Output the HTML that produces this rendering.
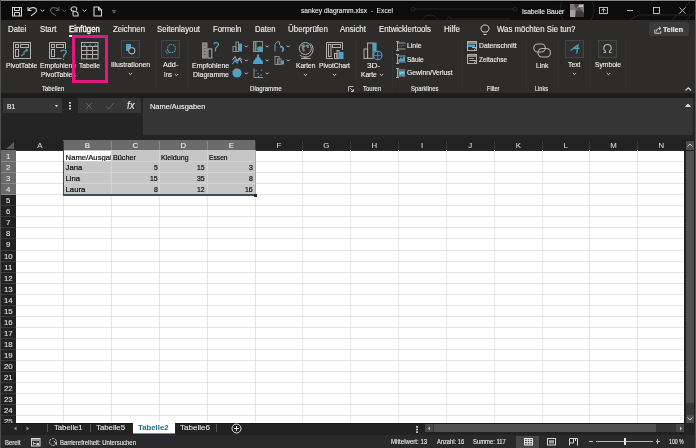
<!DOCTYPE html>
<html><head><meta charset="utf-8"><style>
html,body{margin:0;padding:0;}
body{width:696px;height:448px;overflow:hidden;position:relative;font-family:"Liberation Sans", sans-serif;}
div{font-family:"Liberation Sans", sans-serif;}
</style></head><body>
<div style="position:absolute;left:0px;top:0px;width:696px;height:448px;background:#2d2c2b;"></div><div style="position:absolute;left:0px;top:0px;width:696px;height:20px;background:#0c0c0c;"></div><svg style="position:absolute;left:380px;top:0px;" width="316" height="20" viewBox="0 0 316 20"><g stroke="#262626" stroke-width="1" fill="none"><circle cx="33" cy="9" r="2"/><line x1="35" y1="9" x2="133" y2="9"/><circle cx="135" cy="9" r="2"/><circle cx="50" cy="24" r="9"/><circle cx="69" cy="19" r="2"/><line x1="71" y1="19" x2="130" y2="19"/><circle cx="197" cy="10" r="17"/><path d="M250 20 L258 15 L316 15"/><path d="M292 20 L310 2"/><path d="M306 20 L316 10"/></g></svg><svg style="position:absolute;left:11px;top:6px;" width="12" height="12" viewBox="0 0 12 12"><g stroke="#d8d8d8" stroke-width="1" fill="none"><rect x="1.5" y="1.5" width="9" height="8.5"/><path d="M3.5 1.5 V4.5 H8.5 V1.5"/><path d="M3.5 10 V6.5 H8.5 V10"/></g></svg><svg style="position:absolute;left:27px;top:6px;" width="11" height="11" viewBox="0 0 11 11"><g stroke="#d4d4d4" stroke-width="1.1" fill="none"><path d="M1 1 L1 4.5 L4.5 4.5"/><path d="M1.3 4.3 C3 1 9.5 0.5 9.5 4.5 C9.5 6.5 7 8 4 9.8"/></g></svg><svg style="position:absolute;left:40px;top:9px;" width="5" height="4" viewBox="0 0 5 4"><path d="M0.7 0.7 L2.5 2.5 L4.3 0.7" stroke="#cfcfcf" stroke-width="1" fill="none"/></svg><svg style="position:absolute;left:49px;top:6px;" width="11" height="11" viewBox="0 0 11 11"><g stroke="#5a5a5a" stroke-width="1.1" fill="none"><path d="M10 1 L10 4.5 L6.5 4.5"/><path d="M9.7 4.3 C8 1 1.5 0.5 1.5 4.5 C1.5 6.5 4 8 7 9.8"/></g></svg><svg style="position:absolute;left:62px;top:9px;" width="5" height="4" viewBox="0 0 5 4"><path d="M0.7 0.7 L2.5 2.5 L4.3 0.7" stroke="#5a5a5a" fill="none"/></svg><svg style="position:absolute;left:70px;top:6px;" width="10" height="11" viewBox="0 0 10 11"><g stroke="#d4d4d4" stroke-width="1.1" fill="none"><path d="M2 5 C0 3 1.5 0.8 4 0.8 C6.5 0.8 7.5 3 6 4.5"/><path d="M3 9.5 L3 4 M3 6 C5 5 8 5.5 8 8 L8 10 L3 10"/></g></svg><svg style="position:absolute;left:82px;top:9px;" width="5" height="4" viewBox="0 0 5 4"><path d="M0.7 0.7 L2.5 2.5 L4.3 0.7" stroke="#cfcfcf" fill="none"/></svg><svg style="position:absolute;left:93px;top:6px;" width="10" height="11" viewBox="0 0 10 11"><g stroke="#d4d4d4" stroke-width="1.1" fill="none"><path d="M1 1 L5.5 1 L8.5 4 L8.5 10 L1 10 Z"/><path d="M5.5 1 L5.5 4 L8.5 4"/></g></svg><svg style="position:absolute;left:111.5px;top:9.5px;" width="4" height="4" viewBox="0 0 4 4"><path d="M0 0.5 H4" stroke="#7a7a7a" stroke-width="0.8"/><path d="M0.3 1.6 H3.7 L2 3.4 Z" fill="#7a7a7a"/></svg><div style="position:absolute;left:301.20px;top:7.47px;font-size:7px;line-height:7px;color:#e4e4e4;white-space:pre;transform:scaleX(0.9527) translateZ(0);transform-origin:0 0;-webkit-text-stroke:0.12px currentColor;">sankey diagramm.xlsx  -  Excel</div><div style="position:absolute;left:521.70px;top:7.97px;font-size:7px;line-height:7px;color:#ececec;white-space:pre;transform:scaleX(0.9457) translateZ(0);transform-origin:0 0;-webkit-text-stroke:0.12px currentColor;">Isabelle Bauer</div><svg style="position:absolute;left:570px;top:4px;" width="14" height="13" viewBox="0 0 14 13"><rect width="14" height="13" fill="#7e7878"/><rect x="0" y="6" width="5" height="7" fill="#a8a2a2"/><path d="M5 13 L6 8 C6 5 9 4 11 6 L14 9 L14 13 Z" fill="#3c3a3a"/><path d="M4 0 L9 0 L6 5 Z" fill="#4a4646"/><rect x="9" y="1" width="4" height="2" fill="#c8c4c4"/><circle cx="9" cy="5.5" r="2" fill="#5a5555"/></svg><svg style="position:absolute;left:599px;top:7px;" width="9" height="7" viewBox="0 0 9 7"><rect x="0.5" y="0.5" width="8" height="6" stroke="#c8c8c8" stroke-width="0.9" fill="none"/><path d="M2.5 3.5 L4.5 1.5 L6.5 3.5 M4.5 2 L4.5 5.5" stroke="#c8c8c8" stroke-width="0.9" fill="none"/></svg><div style="position:absolute;left:627px;top:10px;width:6px;height:1px;background:#b8b8b8;"></div><svg style="position:absolute;left:653px;top:7px;" width="7" height="7" viewBox="0 0 7 7"><rect x="0.5" y="0.5" width="6" height="6" stroke="#c8c8c8" stroke-width="0.9" fill="none"/></svg><svg style="position:absolute;left:679px;top:7px;" width="7" height="7" viewBox="0 0 7 7"><path d="M0.5 0.5 L6.5 6.5 M6.5 0.5 L0.5 6.5" stroke="#c8c8c8" stroke-width="0.9" fill="none"/></svg><div style="position:absolute;left:7.90px;top:25.76px;font-size:8.2px;line-height:8.2px;color:#f0f0f0;white-space:pre;transform:scaleX(0.9578) translateZ(0);transform-origin:0 0;-webkit-text-stroke:0.12px currentColor;">Datei</div><div style="position:absolute;left:39.80px;top:25.76px;font-size:8.2px;line-height:8.2px;color:#f0f0f0;white-space:pre;transform:scaleX(0.9479) translateZ(0);transform-origin:0 0;-webkit-text-stroke:0.12px currentColor;">Start</div><div style="position:absolute;left:69.00px;top:25.76px;font-size:8.2px;line-height:8.2px;color:#ffffff;white-space:pre;transform:scaleX(0.9571) translateZ(0);transform-origin:0 0;-webkit-text-stroke:0.3px currentColor;">Einfügen</div><div style="position:absolute;left:112.50px;top:25.76px;font-size:8.2px;line-height:8.2px;color:#f0f0f0;white-space:pre;transform:scaleX(0.9495) translateZ(0);transform-origin:0 0;-webkit-text-stroke:0.12px currentColor;">Zeichnen</div><div style="position:absolute;left:157.00px;top:25.76px;font-size:8.2px;line-height:8.2px;color:#f0f0f0;white-space:pre;transform:scaleX(0.9517) translateZ(0);transform-origin:0 0;-webkit-text-stroke:0.12px currentColor;">Seitenlayout</div><div style="position:absolute;left:213.00px;top:25.76px;font-size:8.2px;line-height:8.2px;color:#f0f0f0;white-space:pre;transform:scaleX(0.9470) translateZ(0);transform-origin:0 0;-webkit-text-stroke:0.12px currentColor;">Formeln</div><div style="position:absolute;left:254.50px;top:25.76px;font-size:8.2px;line-height:8.2px;color:#f0f0f0;white-space:pre;transform:scaleX(0.9363) translateZ(0);transform-origin:0 0;-webkit-text-stroke:0.12px currentColor;">Daten</div><div style="position:absolute;left:288.00px;top:25.76px;font-size:8.2px;line-height:8.2px;color:#f0f0f0;white-space:pre;transform:scaleX(0.9756) translateZ(0);transform-origin:0 0;-webkit-text-stroke:0.12px currentColor;">Überprüfen</div><div style="position:absolute;left:340.00px;top:25.76px;font-size:8.2px;line-height:8.2px;color:#f0f0f0;white-space:pre;transform:scaleX(0.9667) translateZ(0);transform-origin:0 0;-webkit-text-stroke:0.12px currentColor;">Ansicht</div><div style="position:absolute;left:379.00px;top:25.76px;font-size:8.2px;line-height:8.2px;color:#f0f0f0;white-space:pre;transform:scaleX(0.9507) translateZ(0);transform-origin:0 0;-webkit-text-stroke:0.12px currentColor;">Entwicklertools</div><div style="position:absolute;left:444.00px;top:25.76px;font-size:8.2px;line-height:8.2px;color:#f0f0f0;white-space:pre;transform:scaleX(0.9756) translateZ(0);transform-origin:0 0;-webkit-text-stroke:0.12px currentColor;">Hilfe</div><div style="position:absolute;left:69px;top:35px;width:3px;height:2px;background:#e8e8e8;"></div><svg style="position:absolute;left:480px;top:24px;" width="10" height="12" viewBox="0 0 10 12"><g stroke="#d8d8d8" stroke-width="1" fill="none"><path d="M3 8 C1.5 6.5 1 5.5 1 4.5 C1 2 3 1 5 1 C7 1 9 2 9 4.5 C9 5.5 8.5 6.5 7 8 Z"/><line x1="3.5" y1="10.5" x2="6.5" y2="10.5"/></g></svg><div style="position:absolute;left:496.70px;top:25.76px;font-size:8.2px;line-height:8.2px;color:#f0f0f0;white-space:pre;transform:scaleX(0.9554) translateZ(0);transform-origin:0 0;-webkit-text-stroke:0.12px currentColor;">Was möchten Sie tun?</div><div style="position:absolute;left:649px;top:22px;width:40px;height:14px;background:#3b3b3b;border-radius:2px;"></div><svg style="position:absolute;left:653.5px;top:25.5px;" width="8" height="8" viewBox="0 0 8 8"><g stroke="#e0e0e0" stroke-width="0.9" fill="none"><path d="M0.8 3.5 L0.8 7.2 L6.8 7.2 L6.8 5"/><path d="M2.5 5.5 C2.5 3.2 3.8 2.3 6.5 2.3"/><path d="M5 0.6 L6.8 2.3 L5 4"/></g></svg><div style="position:absolute;left:663.30px;top:26.20px;font-size:7.8px;line-height:7.8px;color:#f0f0f0;white-space:pre;transform:scaleX(0.9093) translateZ(0);transform-origin:0 0;-webkit-text-stroke:0.12px currentColor;font-weight:bold;">Teilen</div><div style="position:absolute;left:106px;top:40px;width:1px;height:50px;background:#323232;"></div><div style="position:absolute;left:155px;top:40px;width:1px;height:50px;background:#323232;"></div><div style="position:absolute;left:187px;top:40px;width:1px;height:50px;background:#323232;"></div><div style="position:absolute;left:356px;top:40px;width:1px;height:50px;background:#323232;"></div><div style="position:absolute;left:392px;top:40px;width:1px;height:50px;background:#323232;"></div><div style="position:absolute;left:462px;top:40px;width:1px;height:50px;background:#323232;"></div><div style="position:absolute;left:526px;top:40px;width:1px;height:50px;background:#323232;"></div><div style="position:absolute;left:558px;top:40px;width:1px;height:50px;background:#323232;"></div><div style="position:absolute;left:590px;top:40px;width:1px;height:50px;background:#323232;"></div><div style="position:absolute;left:626px;top:40px;width:1px;height:50px;background:#323232;"></div><svg style="position:absolute;left:13px;top:42px;" width="18" height="17" viewBox="0 0 18 17"><g stroke="#b0b0b0" fill="none" stroke-width="1"><rect x="0.5" y="0.5" width="17" height="16"/><rect x="2.5" y="2.5" width="3" height="3"/><rect x="7.5" y="2.5" width="8" height="3"/><rect x="2.5" y="7.5" width="3" height="7"/></g><path d="M8 14 L11 12 L11 10 L14 8" stroke="#4aa3c8" stroke-width="1.2" fill="none"/><path d="M12.5 7 L14.5 7.5 L14 9.5" stroke="#4aa3c8" fill="none"/></svg><div style="position:absolute;left:5.80px;top:62.66px;font-size:6.9px;line-height:6.9px;color:#f0f0f0;white-space:pre;transform:scaleX(0.9809) translateZ(0);transform-origin:0 0;-webkit-text-stroke:0.12px currentColor;">PivotTable</div><svg style="position:absolute;left:49px;top:42px;" width="19" height="19" viewBox="0 0 19 19"><g stroke="#b0b0b0" fill="none" stroke-width="1"><path d="M12.5 16.5 H0.5 V0.5 H16.5 V7"/><rect x="2.5" y="2.5" width="3" height="3"/><rect x="7.5" y="2.5" width="7" height="3"/><rect x="2.5" y="7.5" width="3" height="7"/></g><path d="M12 9.8 C12 7.5 17.3 7.3 17.3 10 C17.3 12 14.5 12.3 14.5 14.5 L14.5 15.5 M14.5 17 L14.5 18" stroke="#4aa3c8" stroke-width="1.3" fill="none"/></svg><div style="position:absolute;left:39.70px;top:62.66px;font-size:6.9px;line-height:6.9px;color:#f0f0f0;white-space:pre;transform:scaleX(0.9798) translateZ(0);transform-origin:0 0;-webkit-text-stroke:0.12px currentColor;">Empfohlene</div><div style="position:absolute;left:40.80px;top:71.76px;font-size:6.9px;line-height:6.9px;color:#f0f0f0;white-space:pre;transform:scaleX(0.9841) translateZ(0);transform-origin:0 0;-webkit-text-stroke:0.12px currentColor;">PivotTables</div><svg style="position:absolute;left:81px;top:42px;" width="18" height="18" viewBox="0 0 18 18"><g stroke="#b0b0b0" fill="none" stroke-width="1"><rect x="0.5" y="0.5" width="16.5" height="16.3"/><line x1="0.5" y1="4.5" x2="17" y2="4.5"/><line x1="0.5" y1="8.5" x2="17" y2="8.5"/><line x1="0.5" y1="12.5" x2="17" y2="12.5"/><line x1="5.8" y1="4.5" x2="5.8" y2="16.8"/><line x1="11.5" y1="4.5" x2="11.5" y2="16.8"/></g><g fill="#4aa3c8"><path d="M2 3.5 L3.5 1.8 L5 3.5 Z"/><path d="M7.5 3.5 L9 1.8 L10.5 3.5 Z"/><path d="M13 3.5 L14.5 1.8 L16 3.5 Z"/></g></svg><div style="position:absolute;left:79.00px;top:62.66px;font-size:6.9px;line-height:6.9px;color:#f0f0f0;white-space:pre;transform:scaleX(0.9601) translateZ(0);transform-origin:0 0;-webkit-text-stroke:0.12px currentColor;">Tabelle</div><div style="position:absolute;left:42.00px;top:85.76px;font-size:6.9px;line-height:6.9px;color:#f0f0f0;white-space:pre;transform:scaleX(0.8649) translateZ(0);transform-origin:0 0;-webkit-text-stroke:0.12px currentColor;">Tabellen</div><div style="position:absolute;left:72px;top:35px;width:30px;height:42px;border:3px solid #e3177e;"></div><svg style="position:absolute;left:121px;top:40px;" width="19" height="18" viewBox="0 0 19 18"><rect x="0.5" y="0.5" width="18" height="17" fill="#303030" stroke="#5c5c5c" stroke-dasharray="1 1"/><rect x="5" y="4" width="5" height="7" fill="#4aa3c8"/><circle cx="10.8" cy="10.8" r="3.2" stroke="#c8c8c8" stroke-width="1" fill="#2d2d2d"/></svg><div style="position:absolute;left:110.80px;top:61.86px;font-size:6.9px;line-height:6.9px;color:#f0f0f0;white-space:pre;transform:scaleX(1.0020) translateZ(0);transform-origin:0 0;-webkit-text-stroke:0.12px currentColor;">Illustrationen</div><svg style="position:absolute;left:128px;top:72px;" width="5" height="4" viewBox="0 0 5 4"><path d="M0.8 1 L2.5 2.7 L4.2 1" stroke="#cfcfcf" stroke-width="0.9" fill="none"/></svg><svg style="position:absolute;left:161px;top:40px;" width="19" height="18" viewBox="0 0 19 18"><rect x="0.5" y="0.5" width="18" height="17" fill="#303030" stroke="#5c5c5c" stroke-dasharray="1 1"/><g stroke="#4aa3c8" stroke-width="1.1" stroke-dasharray="1.3 0.9" fill="none"><circle cx="10.5" cy="8.5" r="4"/><path d="M7 10 C4 10 4 13 6.5 13 C8 13 9 12 9 12"/></g></svg><div style="position:absolute;left:163.00px;top:61.86px;font-size:6.9px;line-height:6.9px;color:#f0f0f0;white-space:pre;transform:scaleX(1.0509) translateZ(0);transform-origin:0 0;-webkit-text-stroke:0.12px currentColor;">Add-</div><div style="position:absolute;left:163.80px;top:71.76px;font-size:6.9px;line-height:6.9px;color:#f0f0f0;white-space:pre;transform:scaleX(0.8608) translateZ(0);transform-origin:0 0;-webkit-text-stroke:0.12px currentColor;">Ins</div><svg style="position:absolute;left:174px;top:73px;" width="5" height="4" viewBox="0 0 5 4"><path d="M0.8 1 L2.5 2.7 L4.2 1" stroke="#cfcfcf" stroke-width="0.9" fill="none"/></svg><svg style="position:absolute;left:201px;top:41px;" width="20" height="19" viewBox="0 0 20 19"><rect x="1" y="1.3" width="5.5" height="16.3" fill="#8a8a8a"/><g fill="#555"><rect x="3" y="4" width="1.5" height="1"/><rect x="3" y="7" width="1.5" height="1"/><rect x="3" y="10" width="1.5" height="1"/><rect x="3" y="13" width="1.5" height="1"/></g><rect x="7" y="7.9" width="3.8" height="9.2" stroke="#b0b0b0" fill="#2a2a2a"/><path d="M12.8 3.5 C13 1.2 17.5 1 17.5 3.5 C17.5 5.5 14.5 5.5 14.5 8 L14.5 10.5" stroke="#4aa3c8" stroke-width="1.2" fill="none"/></svg><div style="position:absolute;left:191.80px;top:62.66px;font-size:6.9px;line-height:6.9px;color:#f0f0f0;white-space:pre;transform:scaleX(1.0096) translateZ(0);transform-origin:0 0;-webkit-text-stroke:0.12px currentColor;">Empfohlene</div><div style="position:absolute;left:193.00px;top:71.76px;font-size:6.9px;line-height:6.9px;color:#f0f0f0;white-space:pre;transform:scaleX(1.0092) translateZ(0);transform-origin:0 0;-webkit-text-stroke:0.12px currentColor;">Diagramme</div><svg style="position:absolute;left:231.5px;top:40.5px;" width="11" height="11" viewBox="0 0 11 11"><g stroke="#8c8c8c" fill="none"><rect x="1" y="5.5" width="3" height="5"/><rect x="4" y="1" width="2.5" height="9.5"/></g><rect x="6.5" y="2.5" width="3.5" height="8" fill="#4aa3c8"/></svg><svg style="position:absolute;left:243.5px;top:45.0px;" width="5" height="3" viewBox="0 0 5 3"><path d="M0.8 0.6 L2.3 2.1 L3.8 0.6" stroke="#cfcfcf" stroke-width="0.9" fill="none"/></svg><svg style="position:absolute;left:252.5px;top:40.5px;" width="11" height="11" viewBox="0 0 11 11"><g stroke="#8c8c8c" fill="none"><rect x="0.5" y="0.5" width="9" height="10"/></g><rect x="1.5" y="1" width="2" height="9.5" fill="#8c8c8c"/><circle cx="7" cy="8" r="2.8" fill="#4aa3c8"/></svg><svg style="position:absolute;left:264.5px;top:45.0px;" width="5" height="3" viewBox="0 0 5 3"><path d="M0.8 0.6 L2.3 2.1 L3.8 0.6" stroke="#cfcfcf" stroke-width="0.9" fill="none"/></svg><svg style="position:absolute;left:273.5px;top:40.5px;" width="11" height="11" viewBox="0 0 11 11"><path d="M1 10.5 V3 L3 0.8 H5.5 V4" stroke="#8c8c8c" fill="none"/><path d="M6 5.5 C9 5.5 10.5 8.5 8 10.5" stroke="#4aa3c8" stroke-width="1.8" fill="none"/></svg><svg style="position:absolute;left:285.5px;top:45.0px;" width="5" height="3" viewBox="0 0 5 3"><path d="M0.8 0.6 L2.3 2.1 L3.8 0.6" stroke="#cfcfcf" stroke-width="0.9" fill="none"/></svg><svg style="position:absolute;left:231.5px;top:54.5px;" width="11" height="11" viewBox="0 0 11 11"><path d="M0.5 9 L3 5 L5 8 L8 3 L10 5" stroke="#4aa3c8" stroke-width="1.2" fill="none"/><path d="M0.5 5 L3 1.5 L5 6 L7 3 L10 8" stroke="#b0b0b0" fill="none"/></svg><svg style="position:absolute;left:243.5px;top:59.0px;" width="5" height="3" viewBox="0 0 5 3"><path d="M0.8 0.6 L2.3 2.1 L3.8 0.6" stroke="#cfcfcf" stroke-width="0.9" fill="none"/></svg><svg style="position:absolute;left:252.5px;top:54px;" width="11" height="11" viewBox="0 0 11 11"><path d="M4 0.5 H6 V3.5 H6.5 C7.5 3.5 8 5 8 6 H8.5 C10 6 10 9.5 10 10 H0 C0 9 0.5 6 1.5 6 H2 C2 5 2.5 3.5 3.5 3.5 H4 Z" fill="#4aa3c8"/></svg><svg style="position:absolute;left:264.5px;top:58.5px;" width="5" height="3" viewBox="0 0 5 3"><path d="M0.8 0.6 L2.3 2.1 L3.8 0.6" stroke="#cfcfcf" stroke-width="0.9" fill="none"/></svg><svg style="position:absolute;left:273.5px;top:54.5px;" width="11" height="11" viewBox="0 0 11 11"><g stroke="#8c8c8c" fill="none"><rect x="1" y="1.5" width="4" height="8"/><rect x="3.5" y="4" width="3.5" height="5.5"/></g><rect x="7" y="5.5" width="3" height="4" fill="#4aa3c8"/></svg><svg style="position:absolute;left:285.5px;top:59.0px;" width="5" height="3" viewBox="0 0 5 3"><path d="M0.8 0.6 L2.3 2.1 L3.8 0.6" stroke="#cfcfcf" stroke-width="0.9" fill="none"/></svg><svg style="position:absolute;left:231.5px;top:67.5px;" width="11" height="11" viewBox="0 0 11 11"><circle cx="5" cy="5" r="4.6" fill="#4aa3c8"/><path d="M5 5 L5 0.4 A4.6 4.6 0 0 0 0.6 4 Z" fill="#8c8c8c"/></svg><svg style="position:absolute;left:243.5px;top:72.0px;" width="5" height="3" viewBox="0 0 5 3"><path d="M0.8 0.6 L2.3 2.1 L3.8 0.6" stroke="#cfcfcf" stroke-width="0.9" fill="none"/></svg><svg style="position:absolute;left:252.5px;top:67.5px;" width="11" height="11" viewBox="0 0 11 11"><path d="M1 0.5 V9.5 H10" stroke="#8c8c8c" fill="none"/><g fill="#4aa3c8"><rect x="2.5" y="2" width="1.2" height="1.2"/><rect x="4.5" y="5" width="1.2" height="1.2"/><rect x="7.5" y="6.5" width="1.2" height="1.2"/><rect x="8" y="1.5" width="1.2" height="1.2"/><rect x="5" y="8" width="1.2" height="1.2"/></g></svg><svg style="position:absolute;left:264.5px;top:72.0px;" width="5" height="3" viewBox="0 0 5 3"><path d="M0.8 0.6 L2.3 2.1 L3.8 0.6" stroke="#cfcfcf" stroke-width="0.9" fill="none"/></svg><svg style="position:absolute;left:296px;top:40px;" width="18" height="20" viewBox="0 0 18 20"><g stroke="#b0b0b0" fill="none"><circle cx="9.3" cy="8.5" r="6"/><path d="M14.5 3.5 A7.8 7.8 0 0 1 4 15.2" /><line x1="9" y1="16" x2="9" y2="18.5"/><line x1="5" y1="18.5" x2="14.5" y2="18.5"/></g><path d="M5 5 L8 4 L10 6 L8 8 L9 11 L7 12 L6 9 Z M11 4 L13 5 L13 8 L11 8 Z" fill="#7a7a7a"/><g fill="#4aa3c8"><rect x="6.5" y="6" width="1.5" height="1.5"/><rect x="10" y="5" width="1.5" height="1.5"/></g></svg><div style="position:absolute;left:295.80px;top:62.66px;font-size:6.9px;line-height:6.9px;color:#f0f0f0;white-space:pre;transform:scaleX(0.9580) translateZ(0);transform-origin:0 0;-webkit-text-stroke:0.12px currentColor;">Karten</div><svg style="position:absolute;left:303px;top:73px;" width="5" height="4" viewBox="0 0 5 4"><path d="M0.8 1 L2.5 2.7 L4.2 1" stroke="#cfcfcf" stroke-width="0.9" fill="none"/></svg><svg style="position:absolute;left:326px;top:42px;" width="19" height="17" viewBox="0 0 19 17"><g stroke="#b0b0b0" fill="none"><path d="M7 16.5 H0.5 V0.5 H16.5 V8"/><rect x="2.5" y="2.5" width="2.5" height="12"/><rect x="6.5" y="2.5" width="8" height="3"/></g><g stroke="#b0b0b0" fill="none"><rect x="8.5" y="11.5" width="2.5" height="5"/><rect x="11" y="8.5" width="2" height="8"/></g><rect x="13" y="10" width="4.5" height="7" fill="#4aa3c8"/></svg><div style="position:absolute;left:318.70px;top:62.66px;font-size:6.9px;line-height:6.9px;color:#f0f0f0;white-space:pre;transform:scaleX(0.9620) translateZ(0);transform-origin:0 0;-webkit-text-stroke:0.12px currentColor;">PivotChart</div><svg style="position:absolute;left:332px;top:73px;" width="5" height="4" viewBox="0 0 5 4"><path d="M0.8 1 L2.5 2.7 L4.2 1" stroke="#cfcfcf" stroke-width="0.9" fill="none"/></svg><div style="position:absolute;left:250.00px;top:85.76px;font-size:6.9px;line-height:6.9px;color:#f0f0f0;white-space:pre;transform:scaleX(0.8914) translateZ(0);transform-origin:0 0;-webkit-text-stroke:0.12px currentColor;">Diagramme</div><svg style="position:absolute;left:348px;top:86px;" width="6" height="6" viewBox="0 0 6 6"><path d="M0.5 0.5 L5.5 0.5 M0.5 0.5 L0.5 5.5 M2 2 L5.5 5.5 M5.5 3 L5.5 5.5 L3 5.5" stroke="#b0b0b0" fill="none"/></svg><svg style="position:absolute;left:363px;top:42px;" width="20" height="19" viewBox="0 0 20 19"><g stroke="#b0b0b0" fill="none"><rect x="1" y="7" width="3.6" height="9.4"/><rect x="4.6" y="1" width="5.4" height="15.4"/></g><rect x="10" y="0.5" width="3.6" height="9" fill="#4aa3c8"/><circle cx="14.8" cy="13.4" r="4.2" stroke="#4aa3c8" stroke-width="1.1" fill="#2d2d2d"/><path d="M11 13.4 H18.6 M14.8 9.5 V17.3" stroke="#4aa3c8" stroke-width="0.8"/></svg><div style="position:absolute;left:366.70px;top:62.66px;font-size:6.9px;line-height:6.9px;color:#f0f0f0;white-space:pre;transform:scaleX(1.1972) translateZ(0);transform-origin:0 0;-webkit-text-stroke:0.12px currentColor;">3D-</div><div style="position:absolute;left:361.30px;top:71.76px;font-size:6.9px;line-height:6.9px;color:#f0f0f0;white-space:pre;transform:scaleX(0.9520) translateZ(0);transform-origin:0 0;-webkit-text-stroke:0.12px currentColor;">Karte</div><svg style="position:absolute;left:379px;top:73px;" width="5" height="4" viewBox="0 0 5 4"><path d="M0.8 1 L2.5 2.7 L4.2 1" stroke="#cfcfcf" stroke-width="0.9" fill="none"/></svg><div style="position:absolute;left:363.00px;top:85.76px;font-size:6.9px;line-height:6.9px;color:#f0f0f0;white-space:pre;transform:scaleX(0.8667) translateZ(0);transform-origin:0 0;-webkit-text-stroke:0.12px currentColor;">Touren</div><svg style="position:absolute;left:395px;top:41px;" width="11" height="10" viewBox="0 0 11 10"><path d="M2.5 0.5 V9.5 M1 0.5 H4 M1 9.5 H4 M2.5 2 H10.5 M2.5 8 H10.5" stroke="#b0b0b0" stroke-width="0.9" fill="none"/><path d="M3.5 6 L5 4.5 L6.5 5.5 L8 4 L10 5" stroke="#4aa3c8" stroke-width="0.9" stroke-dasharray="1 0.6" fill="none"/></svg><svg style="position:absolute;left:395px;top:54px;" width="11" height="10" viewBox="0 0 11 10"><path d="M2.5 0.5 V9.5 M1 0.5 H4 M1 9.5 H4 M2.5 2 H10.5 M2.5 8 H10.5" stroke="#b0b0b0" stroke-width="0.9" fill="none"/><path d="M3.5 7.5 V5 H5 V3.5 H6.5 V4.5 H8 V3 H10 V7.5 Z" fill="#4aa3c8"/></svg><svg style="position:absolute;left:395px;top:67.5px;" width="11" height="10" viewBox="0 0 11 10"><path d="M2.5 0.5 V9.5 M1 0.5 H4 M1 9.5 H4 M2.5 2 H10.5 M2.5 8 H10.5" stroke="#b0b0b0" stroke-width="0.9" fill="none"/><rect x="3.5" y="3" width="6.5" height="4.5" fill="#4aa3c8"/><path d="M4.5 4.5 L6 5.5 L7.5 4 L9 5.5" stroke="#e8e8e8" stroke-width="0.8" fill="none"/></svg><div style="position:absolute;left:407.00px;top:43.26px;font-size:6.9px;line-height:6.9px;color:#f0f0f0;white-space:pre;transform:scaleX(0.9959) translateZ(0);transform-origin:0 0;-webkit-text-stroke:0.12px currentColor;">Linie</div><div style="position:absolute;left:407.00px;top:56.56px;font-size:6.9px;line-height:6.9px;color:#f0f0f0;white-space:pre;transform:scaleX(0.9454) translateZ(0);transform-origin:0 0;-webkit-text-stroke:0.12px currentColor;">Säule</div><div style="position:absolute;left:407.00px;top:69.96px;font-size:6.9px;line-height:6.9px;color:#f0f0f0;white-space:pre;transform:scaleX(0.9841) translateZ(0);transform-origin:0 0;-webkit-text-stroke:0.12px currentColor;">Gewinn/Verlust</div><div style="position:absolute;left:410.70px;top:85.76px;font-size:6.9px;line-height:6.9px;color:#f0f0f0;white-space:pre;transform:scaleX(0.8534) translateZ(0);transform-origin:0 0;-webkit-text-stroke:0.12px currentColor;">Sparklines</div><svg style="position:absolute;left:467px;top:41px;" width="10" height="10" viewBox="0 0 10 10"><rect x="0.5" y="0.5" width="9" height="9" stroke="#b0b0b0" fill="none"/><rect x="1" y="1" width="8" height="2" fill="#8a8a8a"/><rect x="1" y="3.5" width="7" height="2.5" fill="#4aa3c8"/><path d="M5 6.5 L9 6.5 L7.5 8.5 L7.5 9.5" stroke="#b0b0b0" fill="none"/></svg><svg style="position:absolute;left:467px;top:54px;" width="10" height="10" viewBox="0 0 10 10"><rect x="0.5" y="0.5" width="9" height="9" stroke="#b0b0b0" fill="none"/><rect x="1" y="1" width="8" height="2" fill="#8a8a8a"/><path d="M2 4.5 H7 M2 6.5 H5" stroke="#9a9a9a"/><path d="M5 6.5 L9 6.5 L7.5 8.5 L7.5 9.5" stroke="#b0b0b0" fill="none"/></svg><div style="position:absolute;left:479.00px;top:43.26px;font-size:6.9px;line-height:6.9px;color:#f0f0f0;white-space:pre;transform:scaleX(0.9827) translateZ(0);transform-origin:0 0;-webkit-text-stroke:0.12px currentColor;">Datenschnitt</div><div style="position:absolute;left:479.00px;top:56.56px;font-size:6.9px;line-height:6.9px;color:#f0f0f0;white-space:pre;transform:scaleX(0.9450) translateZ(0);transform-origin:0 0;-webkit-text-stroke:0.12px currentColor;">Zeitachse</div><div style="position:absolute;left:486.50px;top:85.76px;font-size:6.9px;line-height:6.9px;color:#f0f0f0;white-space:pre;transform:scaleX(0.8160) translateZ(0);transform-origin:0 0;-webkit-text-stroke:0.12px currentColor;">Filter</div><svg style="position:absolute;left:533px;top:43px;" width="19" height="15" viewBox="0 0 19 15"><g stroke="#b0b0b0" fill="none" stroke-width="1.1"><rect x="0.8" y="1" width="11.5" height="8" rx="4"/><rect x="5" y="5.5" width="12.5" height="8.5" rx="4.2"/></g></svg><div style="position:absolute;left:535.80px;top:62.66px;font-size:6.9px;line-height:6.9px;color:#f0f0f0;white-space:pre;transform:scaleX(0.9846) translateZ(0);transform-origin:0 0;-webkit-text-stroke:0.12px currentColor;">Link</div><div style="position:absolute;left:535.00px;top:85.76px;font-size:6.9px;line-height:6.9px;color:#f0f0f0;white-space:pre;transform:scaleX(0.8086) translateZ(0);transform-origin:0 0;-webkit-text-stroke:0.12px currentColor;">Links</div><svg style="position:absolute;left:565px;top:40px;" width="19" height="18" viewBox="0 0 19 18"><rect x="0.5" y="0.5" width="18" height="17" fill="#303030" stroke="#5c5c5c" stroke-dasharray="1 1"/><path d="M5.5 10.5 L13 5 L11.8 13.5 M9 8.5 L14.5 8.3" stroke="#4aa3c8" stroke-width="1.3" fill="none"/></svg><div style="position:absolute;left:567.50px;top:61.86px;font-size:6.9px;line-height:6.9px;color:#f0f0f0;white-space:pre;transform:scaleX(0.9846) translateZ(0);transform-origin:0 0;-webkit-text-stroke:0.12px currentColor;">Text</div><svg style="position:absolute;left:572px;top:72px;" width="5" height="4" viewBox="0 0 5 4"><path d="M0.8 1 L2.5 2.7 L4.2 1" stroke="#cfcfcf" stroke-width="0.9" fill="none"/></svg><svg style="position:absolute;left:598px;top:40px;" width="19" height="18" viewBox="0 0 19 18"><rect x="0.5" y="0.5" width="18" height="17" fill="#303030" stroke="#5c5c5c" stroke-dasharray="1 1"/><path d="M5.5 12.5 L7.5 12.5 L7.5 11 C5 10 5 4.5 9.5 4.5 C14 4.5 14 10 11.5 11 L11.5 12.5 L13.5 12.5" stroke="#b0b0b0" stroke-width="1.1" fill="none"/></svg><div style="position:absolute;left:594.70px;top:61.86px;font-size:6.9px;line-height:6.9px;color:#f0f0f0;white-space:pre;transform:scaleX(0.9724) translateZ(0);transform-origin:0 0;-webkit-text-stroke:0.12px currentColor;">Symbole</div><svg style="position:absolute;left:606px;top:72px;" width="5" height="4" viewBox="0 0 5 4"><path d="M0.8 1 L2.5 2.7 L4.2 1" stroke="#cfcfcf" stroke-width="0.9" fill="none"/></svg><svg style="position:absolute;left:684.5px;top:87px;" width="7" height="5" viewBox="0 0 7 5"><path d="M0.5 3.5 L3.3 0.8 L6.1 3.5" stroke="#d8d8d8" stroke-width="1.1" fill="none"/></svg><div style="position:absolute;left:1px;top:93px;width:694px;height:47px;background:#242424;"></div><div style="position:absolute;left:1px;top:93px;width:694px;height:5px;background:#1d1d1d;"></div><div style="position:absolute;left:3px;top:98px;width:59px;height:15px;background:#363636;"></div><div style="position:absolute;left:6.70px;top:102.90px;font-size:7.8px;line-height:7.8px;color:#f0f0f0;white-space:pre;transform:scaleX(0.8827) translateZ(0);transform-origin:0 0;-webkit-text-stroke:0.12px currentColor;">B1</div><svg style="position:absolute;left:54.5px;top:104.5px;" width="3" height="2.5" viewBox="0 0 3 2.5"><path d="M0 0 L3 0 L1.5 2.2 Z" fill="#e8e8e8"/></svg><svg style="position:absolute;left:69px;top:102px;" width="3" height="8" viewBox="0 0 3 8"><g fill="#d0d0d0"><rect x="0" y="0" width="2" height="1.7"/><rect x="0" y="3" width="2" height="1.7"/><rect x="0" y="5.8" width="2" height="1.7"/></g></svg><div style="position:absolute;left:78px;top:98px;width:63px;height:15px;background:#363636;"></div><svg style="position:absolute;left:85px;top:102px;" width="8" height="8" viewBox="0 0 8 8"><path d="M1 1 L7 7 M7 1 L1 7" stroke="#6a6a6a" stroke-width="0.9"/></svg><svg style="position:absolute;left:105px;top:102px;" width="10" height="8" viewBox="0 0 10 8"><path d="M1 4.5 L3.8 7 L8.8 1" stroke="#6a6a6a" stroke-width="0.9" fill="none"/></svg><div style="position:absolute;left:126.70px;top:100.73px;font-size:10px;line-height:10px;color:#e8e8e8;white-space:pre;transform:scaleX(0.9615) translateZ(0);transform-origin:0 0;-webkit-text-stroke:0.1px currentColor;font-style:italic;font-family:"Liberation Serif",serif;">fx</div><div style="position:absolute;left:143px;top:98px;width:550px;height:37px;background:#363636;"></div><div style="position:absolute;left:149.70px;top:102.80px;font-size:7.8px;line-height:7.8px;color:#f0f0f0;white-space:pre;transform:scaleX(0.9516) translateZ(0);transform-origin:0 0;-webkit-text-stroke:0.12px currentColor;">Name/Ausgaben</div><svg style="position:absolute;left:685px;top:103px;" width="6" height="4" viewBox="0 0 6 4"><path d="M0.5 3.5 L3 1 L5.5 3.5 Z" stroke="#e0e0e0" fill="#e0e0e0" stroke-width="0.8"/></svg><div style="position:absolute;left:1px;top:140px;width:684px;height:10px;background:#222222;"></div><div style="position:absolute;left:1px;top:150px;width:15px;height:272px;background:#222222;"></div><div style="position:absolute;left:63px;top:140px;width:192px;height:10px;background:#6b6b6b;"></div><div style="position:absolute;left:1px;top:150px;width:15px;height:44px;background:#6b6b6b;"></div><svg style="position:absolute;left:6px;top:142px;" width="9" height="8" viewBox="0 0 9 8"><path d="M8 0 L8 7 L0 7 Z" fill="#5a5a5a"/></svg><div style="position:absolute;left:16px;top:150.6px;width:668px;height:272px;background:#ffffff;"></div><div style="position:absolute;left:63px;top:150px;width:1px;height:272px;background:#e4e4e4;"></div><div style="position:absolute;left:63px;top:141px;width:1px;height:9px;background:#3a3a3a;"></div><div style="position:absolute;left:111px;top:150px;width:1px;height:272px;background:#e4e4e4;"></div><div style="position:absolute;left:111px;top:141px;width:1px;height:9px;background:#888;"></div><div style="position:absolute;left:159px;top:150px;width:1px;height:272px;background:#e4e4e4;"></div><div style="position:absolute;left:159px;top:141px;width:1px;height:9px;background:#888;"></div><div style="position:absolute;left:207px;top:150px;width:1px;height:272px;background:#e4e4e4;"></div><div style="position:absolute;left:207px;top:141px;width:1px;height:9px;background:#888;"></div><div style="position:absolute;left:255px;top:150px;width:1px;height:272px;background:#e4e4e4;"></div><div style="position:absolute;left:255px;top:141px;width:1px;height:9px;background:#3a3a3a;"></div><div style="position:absolute;left:302px;top:150px;width:1px;height:272px;background:#e4e4e4;"></div><div style="position:absolute;left:302px;top:141px;width:1px;height:9px;background:#3a3a3a;"></div><div style="position:absolute;left:350px;top:150px;width:1px;height:272px;background:#e4e4e4;"></div><div style="position:absolute;left:350px;top:141px;width:1px;height:9px;background:#3a3a3a;"></div><div style="position:absolute;left:398px;top:150px;width:1px;height:272px;background:#e4e4e4;"></div><div style="position:absolute;left:398px;top:141px;width:1px;height:9px;background:#3a3a3a;"></div><div style="position:absolute;left:446px;top:150px;width:1px;height:272px;background:#e4e4e4;"></div><div style="position:absolute;left:446px;top:141px;width:1px;height:9px;background:#3a3a3a;"></div><div style="position:absolute;left:494px;top:150px;width:1px;height:272px;background:#e4e4e4;"></div><div style="position:absolute;left:494px;top:141px;width:1px;height:9px;background:#3a3a3a;"></div><div style="position:absolute;left:542px;top:150px;width:1px;height:272px;background:#e4e4e4;"></div><div style="position:absolute;left:542px;top:141px;width:1px;height:9px;background:#3a3a3a;"></div><div style="position:absolute;left:589px;top:150px;width:1px;height:272px;background:#e4e4e4;"></div><div style="position:absolute;left:589px;top:141px;width:1px;height:9px;background:#3a3a3a;"></div><div style="position:absolute;left:637px;top:150px;width:1px;height:272px;background:#e4e4e4;"></div><div style="position:absolute;left:637px;top:141px;width:1px;height:9px;background:#3a3a3a;"></div><div style="position:absolute;left:16px;top:161px;width:668px;height:1px;background:#e4e4e4;"></div><div style="position:absolute;left:1px;top:161px;width:15px;height:1px;background:#888;"></div><div style="position:absolute;left:16px;top:172px;width:668px;height:1px;background:#e4e4e4;"></div><div style="position:absolute;left:1px;top:172px;width:15px;height:1px;background:#888;"></div><div style="position:absolute;left:16px;top:183px;width:668px;height:1px;background:#e4e4e4;"></div><div style="position:absolute;left:1px;top:183px;width:15px;height:1px;background:#888;"></div><div style="position:absolute;left:16px;top:194px;width:668px;height:1px;background:#e4e4e4;"></div><div style="position:absolute;left:1px;top:194px;width:15px;height:1px;background:#888;"></div><div style="position:absolute;left:16px;top:205px;width:668px;height:1px;background:#e4e4e4;"></div><div style="position:absolute;left:1px;top:205px;width:15px;height:1px;background:#3a3a3a;"></div><div style="position:absolute;left:16px;top:216px;width:668px;height:1px;background:#e4e4e4;"></div><div style="position:absolute;left:1px;top:216px;width:15px;height:1px;background:#3a3a3a;"></div><div style="position:absolute;left:16px;top:227px;width:668px;height:1px;background:#e4e4e4;"></div><div style="position:absolute;left:1px;top:227px;width:15px;height:1px;background:#3a3a3a;"></div><div style="position:absolute;left:16px;top:238px;width:668px;height:1px;background:#e4e4e4;"></div><div style="position:absolute;left:1px;top:238px;width:15px;height:1px;background:#3a3a3a;"></div><div style="position:absolute;left:16px;top:250px;width:668px;height:1px;background:#e4e4e4;"></div><div style="position:absolute;left:1px;top:250px;width:15px;height:1px;background:#3a3a3a;"></div><div style="position:absolute;left:16px;top:261px;width:668px;height:1px;background:#e4e4e4;"></div><div style="position:absolute;left:1px;top:261px;width:15px;height:1px;background:#3a3a3a;"></div><div style="position:absolute;left:16px;top:272px;width:668px;height:1px;background:#e4e4e4;"></div><div style="position:absolute;left:1px;top:272px;width:15px;height:1px;background:#3a3a3a;"></div><div style="position:absolute;left:16px;top:283px;width:668px;height:1px;background:#e4e4e4;"></div><div style="position:absolute;left:1px;top:283px;width:15px;height:1px;background:#3a3a3a;"></div><div style="position:absolute;left:16px;top:294px;width:668px;height:1px;background:#e4e4e4;"></div><div style="position:absolute;left:1px;top:294px;width:15px;height:1px;background:#3a3a3a;"></div><div style="position:absolute;left:16px;top:305px;width:668px;height:1px;background:#e4e4e4;"></div><div style="position:absolute;left:1px;top:305px;width:15px;height:1px;background:#3a3a3a;"></div><div style="position:absolute;left:16px;top:316px;width:668px;height:1px;background:#e4e4e4;"></div><div style="position:absolute;left:1px;top:316px;width:15px;height:1px;background:#3a3a3a;"></div><div style="position:absolute;left:16px;top:327px;width:668px;height:1px;background:#e4e4e4;"></div><div style="position:absolute;left:1px;top:327px;width:15px;height:1px;background:#3a3a3a;"></div><div style="position:absolute;left:16px;top:338px;width:668px;height:1px;background:#e4e4e4;"></div><div style="position:absolute;left:1px;top:338px;width:15px;height:1px;background:#3a3a3a;"></div><div style="position:absolute;left:16px;top:349px;width:668px;height:1px;background:#e4e4e4;"></div><div style="position:absolute;left:1px;top:349px;width:15px;height:1px;background:#3a3a3a;"></div><div style="position:absolute;left:16px;top:360px;width:668px;height:1px;background:#e4e4e4;"></div><div style="position:absolute;left:1px;top:360px;width:15px;height:1px;background:#3a3a3a;"></div><div style="position:absolute;left:16px;top:371px;width:668px;height:1px;background:#e4e4e4;"></div><div style="position:absolute;left:1px;top:371px;width:15px;height:1px;background:#3a3a3a;"></div><div style="position:absolute;left:16px;top:382px;width:668px;height:1px;background:#e4e4e4;"></div><div style="position:absolute;left:1px;top:382px;width:15px;height:1px;background:#3a3a3a;"></div><div style="position:absolute;left:16px;top:393px;width:668px;height:1px;background:#e4e4e4;"></div><div style="position:absolute;left:1px;top:393px;width:15px;height:1px;background:#3a3a3a;"></div><div style="position:absolute;left:16px;top:404px;width:668px;height:1px;background:#e4e4e4;"></div><div style="position:absolute;left:1px;top:404px;width:15px;height:1px;background:#3a3a3a;"></div><div style="position:absolute;left:16px;top:415px;width:668px;height:1px;background:#e4e4e4;"></div><div style="position:absolute;left:1px;top:415px;width:15px;height:1px;background:#3a3a3a;"></div><div style="position:absolute;left:37.20px;top:142.30px;font-size:7.8px;line-height:7.8px;color:#d4d4d4;white-space:pre;transform:scaleX(1.0000) translateZ(0);transform-origin:0 0;-webkit-text-stroke:0.1px currentColor;">A</div><div style="position:absolute;left:84.70px;top:142.30px;font-size:7.8px;line-height:7.8px;color:#f4f4f4;white-space:pre;transform:scaleX(1.0000) translateZ(0);transform-origin:0 0;-webkit-text-stroke:0.1px currentColor;">B</div><div style="position:absolute;left:132.53px;top:142.30px;font-size:7.8px;line-height:7.8px;color:#f4f4f4;white-space:pre;transform:scaleX(1.0000) translateZ(0);transform-origin:0 0;-webkit-text-stroke:0.1px currentColor;">C</div><div style="position:absolute;left:180.53px;top:142.30px;font-size:7.8px;line-height:7.8px;color:#f4f4f4;white-space:pre;transform:scaleX(1.0000) translateZ(0);transform-origin:0 0;-webkit-text-stroke:0.1px currentColor;">D</div><div style="position:absolute;left:228.70px;top:142.30px;font-size:7.8px;line-height:7.8px;color:#f4f4f4;white-space:pre;transform:scaleX(1.0000) translateZ(0);transform-origin:0 0;-webkit-text-stroke:0.1px currentColor;">E</div><div style="position:absolute;left:276.41px;top:142.30px;font-size:7.8px;line-height:7.8px;color:#d4d4d4;white-space:pre;transform:scaleX(1.0000) translateZ(0);transform-origin:0 0;-webkit-text-stroke:0.1px currentColor;">F</div><div style="position:absolute;left:323.32px;top:142.30px;font-size:7.8px;line-height:7.8px;color:#d4d4d4;white-space:pre;transform:scaleX(1.0000) translateZ(0);transform-origin:0 0;-webkit-text-stroke:0.1px currentColor;">G</div><div style="position:absolute;left:371.53px;top:142.30px;font-size:7.8px;line-height:7.8px;color:#d4d4d4;white-space:pre;transform:scaleX(1.0000) translateZ(0);transform-origin:0 0;-webkit-text-stroke:0.1px currentColor;">H</div><div style="position:absolute;left:421.04px;top:142.30px;font-size:7.8px;line-height:7.8px;color:#d4d4d4;white-space:pre;transform:scaleX(1.0000) translateZ(0);transform-origin:0 0;-webkit-text-stroke:0.1px currentColor;">I</div><div style="position:absolute;left:468.28px;top:142.30px;font-size:7.8px;line-height:7.8px;color:#d4d4d4;white-space:pre;transform:scaleX(1.0000) translateZ(0);transform-origin:0 0;-webkit-text-stroke:0.1px currentColor;">J</div><div style="position:absolute;left:515.70px;top:142.30px;font-size:7.8px;line-height:7.8px;color:#d4d4d4;white-space:pre;transform:scaleX(1.0000) translateZ(0);transform-origin:0 0;-webkit-text-stroke:0.1px currentColor;">K</div><div style="position:absolute;left:563.58px;top:142.30px;font-size:7.8px;line-height:7.8px;color:#d4d4d4;white-space:pre;transform:scaleX(1.0000) translateZ(0);transform-origin:0 0;-webkit-text-stroke:0.1px currentColor;">L</div><div style="position:absolute;left:610.15px;top:142.30px;font-size:7.8px;line-height:7.8px;color:#d4d4d4;white-space:pre;transform:scaleX(1.0000) translateZ(0);transform-origin:0 0;-webkit-text-stroke:0.1px currentColor;">M</div><div style="position:absolute;left:658.53px;top:142.30px;font-size:7.8px;line-height:7.8px;color:#d4d4d4;white-space:pre;transform:scaleX(1.0000) translateZ(0);transform-origin:0 0;-webkit-text-stroke:0.1px currentColor;">N</div><div style="position:absolute;left:6.12px;top:153.00px;font-size:7.8px;line-height:7.8px;color:#e0e0e0;white-space:pre;transform:scaleX(1.0000) translateZ(0);transform-origin:0 0;-webkit-text-stroke:0.1px currentColor;">1</div><div style="position:absolute;left:6.12px;top:164.00px;font-size:7.8px;line-height:7.8px;color:#e0e0e0;white-space:pre;transform:scaleX(1.0000) translateZ(0);transform-origin:0 0;-webkit-text-stroke:0.1px currentColor;">2</div><div style="position:absolute;left:6.12px;top:175.00px;font-size:7.8px;line-height:7.8px;color:#e0e0e0;white-space:pre;transform:scaleX(1.0000) translateZ(0);transform-origin:0 0;-webkit-text-stroke:0.1px currentColor;">3</div><div style="position:absolute;left:6.12px;top:186.00px;font-size:7.8px;line-height:7.8px;color:#e0e0e0;white-space:pre;transform:scaleX(1.0000) translateZ(0);transform-origin:0 0;-webkit-text-stroke:0.1px currentColor;">4</div><div style="position:absolute;left:6.12px;top:197.00px;font-size:7.8px;line-height:7.8px;color:#e0e0e0;white-space:pre;transform:scaleX(1.0000) translateZ(0);transform-origin:0 0;-webkit-text-stroke:0.1px currentColor;">5</div><div style="position:absolute;left:6.12px;top:208.00px;font-size:7.8px;line-height:7.8px;color:#e0e0e0;white-space:pre;transform:scaleX(1.0000) translateZ(0);transform-origin:0 0;-webkit-text-stroke:0.1px currentColor;">6</div><div style="position:absolute;left:6.12px;top:219.00px;font-size:7.8px;line-height:7.8px;color:#e0e0e0;white-space:pre;transform:scaleX(1.0000) translateZ(0);transform-origin:0 0;-webkit-text-stroke:0.1px currentColor;">7</div><div style="position:absolute;left:6.12px;top:230.00px;font-size:7.8px;line-height:7.8px;color:#e0e0e0;white-space:pre;transform:scaleX(1.0000) translateZ(0);transform-origin:0 0;-webkit-text-stroke:0.1px currentColor;">8</div><div style="position:absolute;left:6.12px;top:241.00px;font-size:7.8px;line-height:7.8px;color:#e0e0e0;white-space:pre;transform:scaleX(1.0000) translateZ(0);transform-origin:0 0;-webkit-text-stroke:0.1px currentColor;">9</div><div style="position:absolute;left:3.97px;top:253.00px;font-size:7.8px;line-height:7.8px;color:#e0e0e0;white-space:pre;transform:scaleX(1.0000) translateZ(0);transform-origin:0 0;-webkit-text-stroke:0.1px currentColor;">10</div><div style="position:absolute;left:4.24px;top:264.00px;font-size:7.8px;line-height:7.8px;color:#e0e0e0;white-space:pre;transform:scaleX(1.0000) translateZ(0);transform-origin:0 0;-webkit-text-stroke:0.1px currentColor;">11</div><div style="position:absolute;left:3.97px;top:275.00px;font-size:7.8px;line-height:7.8px;color:#e0e0e0;white-space:pre;transform:scaleX(1.0000) translateZ(0);transform-origin:0 0;-webkit-text-stroke:0.1px currentColor;">12</div><div style="position:absolute;left:3.97px;top:286.00px;font-size:7.8px;line-height:7.8px;color:#e0e0e0;white-space:pre;transform:scaleX(1.0000) translateZ(0);transform-origin:0 0;-webkit-text-stroke:0.1px currentColor;">13</div><div style="position:absolute;left:3.97px;top:297.00px;font-size:7.8px;line-height:7.8px;color:#e0e0e0;white-space:pre;transform:scaleX(1.0000) translateZ(0);transform-origin:0 0;-webkit-text-stroke:0.1px currentColor;">14</div><div style="position:absolute;left:3.97px;top:308.00px;font-size:7.8px;line-height:7.8px;color:#e0e0e0;white-space:pre;transform:scaleX(1.0000) translateZ(0);transform-origin:0 0;-webkit-text-stroke:0.1px currentColor;">15</div><div style="position:absolute;left:3.97px;top:319.00px;font-size:7.8px;line-height:7.8px;color:#e0e0e0;white-space:pre;transform:scaleX(1.0000) translateZ(0);transform-origin:0 0;-webkit-text-stroke:0.1px currentColor;">16</div><div style="position:absolute;left:3.97px;top:330.00px;font-size:7.8px;line-height:7.8px;color:#e0e0e0;white-space:pre;transform:scaleX(1.0000) translateZ(0);transform-origin:0 0;-webkit-text-stroke:0.1px currentColor;">17</div><div style="position:absolute;left:3.97px;top:341.00px;font-size:7.8px;line-height:7.8px;color:#e0e0e0;white-space:pre;transform:scaleX(1.0000) translateZ(0);transform-origin:0 0;-webkit-text-stroke:0.1px currentColor;">18</div><div style="position:absolute;left:3.97px;top:352.00px;font-size:7.8px;line-height:7.8px;color:#e0e0e0;white-space:pre;transform:scaleX(1.0000) translateZ(0);transform-origin:0 0;-webkit-text-stroke:0.1px currentColor;">19</div><div style="position:absolute;left:3.97px;top:363.00px;font-size:7.8px;line-height:7.8px;color:#e0e0e0;white-space:pre;transform:scaleX(1.0000) translateZ(0);transform-origin:0 0;-webkit-text-stroke:0.1px currentColor;">20</div><div style="position:absolute;left:3.97px;top:374.00px;font-size:7.8px;line-height:7.8px;color:#e0e0e0;white-space:pre;transform:scaleX(1.0000) translateZ(0);transform-origin:0 0;-webkit-text-stroke:0.1px currentColor;">21</div><div style="position:absolute;left:3.97px;top:385.00px;font-size:7.8px;line-height:7.8px;color:#e0e0e0;white-space:pre;transform:scaleX(1.0000) translateZ(0);transform-origin:0 0;-webkit-text-stroke:0.1px currentColor;">22</div><div style="position:absolute;left:3.97px;top:396.00px;font-size:7.8px;line-height:7.8px;color:#e0e0e0;white-space:pre;transform:scaleX(1.0000) translateZ(0);transform-origin:0 0;-webkit-text-stroke:0.1px currentColor;">23</div><div style="position:absolute;left:3.97px;top:407.00px;font-size:7.8px;line-height:7.8px;color:#e0e0e0;white-space:pre;transform:scaleX(1.0000) translateZ(0);transform-origin:0 0;-webkit-text-stroke:0.1px currentColor;">24</div><div style="position:absolute;left:3.97px;top:418.00px;font-size:7.8px;line-height:7.8px;color:#e0e0e0;white-space:pre;transform:scaleX(1.0000) translateZ(0);transform-origin:0 0;-webkit-text-stroke:0.1px currentColor;">25</div><div style="position:absolute;left:63px;top:150px;width:192px;height:44px;background:#c6c6c6;"></div><div style="position:absolute;left:111px;top:150px;width:1px;height:44px;background:#d2d2d2;"></div><div style="position:absolute;left:159px;top:150px;width:1px;height:44px;background:#d2d2d2;"></div><div style="position:absolute;left:207px;top:150px;width:1px;height:44px;background:#d2d2d2;"></div><div style="position:absolute;left:63px;top:161px;width:192px;height:1px;background:#d2d2d2;"></div><div style="position:absolute;left:63px;top:172px;width:192px;height:1px;background:#d2d2d2;"></div><div style="position:absolute;left:63px;top:183px;width:192px;height:1px;background:#d2d2d2;"></div><div style="position:absolute;left:64px;top:151px;width:47px;height:10px;background:#ffffff;"></div><div style="position:absolute;left:63px;top:150px;width:1px;height:45px;background:#34505c;"></div><div style="position:absolute;left:63px;top:194px;width:193px;height:1.5px;background:#34505c;"></div><div style="position:absolute;left:255px;top:150px;width:1px;height:44px;background:#a8a8a8;"></div><div style="position:absolute;left:254px;top:193.5px;width:3px;height:3px;background:#1e2a30;"></div><div style="position:absolute;left:64px;top:151px;width:47px;height:10px;overflow:hidden;"><div style="position:absolute;left:1.60px;top:2.58px;font-size:7.7px;line-height:7.7px;color:#0a0a0a;white-space:pre;transform:scaleX(1.0000) translateZ(0);transform-origin:0 0;-webkit-text-stroke:0.2px currentColor;">Name/Ausgaben</div></div><div style="position:absolute;left:113.30px;top:153.58px;font-size:7.7px;line-height:7.7px;color:#0a0a0a;white-space:pre;transform:scaleX(0.9423) translateZ(0);transform-origin:0 0;-webkit-text-stroke:0.2px currentColor;">Bücher</div><div style="position:absolute;left:160.90px;top:153.58px;font-size:7.7px;line-height:7.7px;color:#0a0a0a;white-space:pre;transform:scaleX(0.9214) translateZ(0);transform-origin:0 0;-webkit-text-stroke:0.2px currentColor;">Kleidung</div><div style="position:absolute;left:208.50px;top:153.58px;font-size:7.7px;line-height:7.7px;color:#0a0a0a;white-space:pre;transform:scaleX(0.8689) translateZ(0);transform-origin:0 0;-webkit-text-stroke:0.2px currentColor;">Essen</div><div style="position:absolute;left:65.60px;top:164.38px;font-size:7.7px;line-height:7.7px;color:#0a0a0a;white-space:pre;transform:scaleX(1.0000) translateZ(0);transform-origin:0 0;-webkit-text-stroke:0.2px currentColor;">Jana</div><div style="position:absolute;left:153.62px;top:164.38px;font-size:7.7px;line-height:7.7px;color:#0a0a0a;white-space:pre;transform:scaleX(0.9000) translateZ(0);transform-origin:0 0;-webkit-text-stroke:0.2px currentColor;">5</div><div style="position:absolute;left:196.91px;top:164.38px;font-size:7.7px;line-height:7.7px;color:#0a0a0a;white-space:pre;transform:scaleX(0.9000) translateZ(0);transform-origin:0 0;-webkit-text-stroke:0.2px currentColor;">15</div><div style="position:absolute;left:249.02px;top:164.38px;font-size:7.7px;line-height:7.7px;color:#0a0a0a;white-space:pre;transform:scaleX(0.9000) translateZ(0);transform-origin:0 0;-webkit-text-stroke:0.2px currentColor;">3</div><div style="position:absolute;left:65.60px;top:175.38px;font-size:7.7px;line-height:7.7px;color:#0a0a0a;white-space:pre;transform:scaleX(1.0000) translateZ(0);transform-origin:0 0;-webkit-text-stroke:0.2px currentColor;">Lina</div><div style="position:absolute;left:149.81px;top:175.38px;font-size:7.7px;line-height:7.7px;color:#0a0a0a;white-space:pre;transform:scaleX(0.9000) translateZ(0);transform-origin:0 0;-webkit-text-stroke:0.2px currentColor;">15</div><div style="position:absolute;left:196.91px;top:175.38px;font-size:7.7px;line-height:7.7px;color:#0a0a0a;white-space:pre;transform:scaleX(0.9000) translateZ(0);transform-origin:0 0;-webkit-text-stroke:0.2px currentColor;">35</div><div style="position:absolute;left:249.02px;top:175.38px;font-size:7.7px;line-height:7.7px;color:#0a0a0a;white-space:pre;transform:scaleX(0.9000) translateZ(0);transform-origin:0 0;-webkit-text-stroke:0.2px currentColor;">8</div><div style="position:absolute;left:65.60px;top:186.48px;font-size:7.7px;line-height:7.7px;color:#0a0a0a;white-space:pre;transform:scaleX(1.0000) translateZ(0);transform-origin:0 0;-webkit-text-stroke:0.2px currentColor;">Laura</div><div style="position:absolute;left:153.62px;top:186.48px;font-size:7.7px;line-height:7.7px;color:#0a0a0a;white-space:pre;transform:scaleX(0.9000) translateZ(0);transform-origin:0 0;-webkit-text-stroke:0.2px currentColor;">8</div><div style="position:absolute;left:196.91px;top:186.48px;font-size:7.7px;line-height:7.7px;color:#0a0a0a;white-space:pre;transform:scaleX(0.9000) translateZ(0);transform-origin:0 0;-webkit-text-stroke:0.2px currentColor;">12</div><div style="position:absolute;left:245.21px;top:186.48px;font-size:7.7px;line-height:7.7px;color:#0a0a0a;white-space:pre;transform:scaleX(0.9000) translateZ(0);transform-origin:0 0;-webkit-text-stroke:0.2px currentColor;">16</div><div style="position:absolute;left:684px;top:140px;width:12px;height:283px;background:#1f1f1f;"></div><div style="position:absolute;left:686px;top:141px;width:8px;height:9px;background:#4d4d4d;"></div><svg style="position:absolute;left:687px;top:143px;" width="6" height="4" viewBox="0 0 6 4"><path d="M0.5 3.5 L3 1 L5.5 3.5" stroke="#d0d0d0" stroke-width="1" fill="none"/></svg><div style="position:absolute;left:686px;top:150.5px;width:8px;height:252px;background:#505252;"></div><div style="position:absolute;left:686px;top:402.5px;width:8px;height:12px;background:#383838;"></div><div style="position:absolute;left:686px;top:414.5px;width:8px;height:8px;background:#4d4d4d;"></div><svg style="position:absolute;left:687px;top:417px;" width="6" height="4" viewBox="0 0 6 4"><path d="M0.5 0.5 L3 3 L5.5 0.5" stroke="#d0d0d0" stroke-width="1" fill="none"/></svg><div style="position:absolute;left:1px;top:422.5px;width:694px;height:12.3px;background:#222222;"></div><div style="position:absolute;left:1px;top:422.5px;width:683px;height:1.2px;background:#171717;"></div><svg style="position:absolute;left:12.5px;top:426px;" width="4" height="5" viewBox="0 0 4 5"><path d="M3.5 0.5 L1 2.5 L3.5 4.5 Z" fill="#9a9a9a"/></svg><svg style="position:absolute;left:25.5px;top:426px;" width="4" height="5" viewBox="0 0 4 5"><path d="M0.5 0.5 L3 2.5 L0.5 4.5 Z" fill="#9a9a9a"/></svg><div style="position:absolute;left:47px;top:424px;width:1px;height:8px;background:#555;"></div><div style="position:absolute;left:53.90px;top:423.53px;font-size:8px;line-height:8px;color:#e8e8e8;white-space:pre;transform:scaleX(0.9610) translateZ(0);transform-origin:0 0;-webkit-text-stroke:0.1px currentColor;">Tabelle1</div><div style="position:absolute;left:90px;top:424px;width:1px;height:8px;background:#555;"></div><div style="position:absolute;left:96.20px;top:423.53px;font-size:8px;line-height:8px;color:#e8e8e8;white-space:pre;transform:scaleX(0.9745) translateZ(0);transform-origin:0 0;-webkit-text-stroke:0.1px currentColor;">Tabelle5</div><div style="position:absolute;left:132.5px;top:422.5px;width:42.2px;height:11.5px;background:#ffffff;"></div><div style="position:absolute;left:132.5px;top:433px;width:42.2px;height:1px;background:#5a9ab8;"></div><div style="position:absolute;left:138.10px;top:423.63px;font-size:8px;line-height:8px;color:#226a88;white-space:pre;transform:scaleX(0.9733) translateZ(0);transform-origin:0 0;-webkit-text-stroke:0px currentColor;font-weight:bold;">Tabelle2</div><div style="position:absolute;left:180.00px;top:423.53px;font-size:8px;line-height:8px;color:#e8e8e8;white-space:pre;transform:scaleX(1.0081) translateZ(0);transform-origin:0 0;-webkit-text-stroke:0.1px currentColor;">Tabelle6</div><div style="position:absolute;left:216px;top:424px;width:1px;height:8px;background:#555;"></div><svg style="position:absolute;left:231px;top:423px;" width="11" height="11" viewBox="0 0 11 11"><circle cx="5.5" cy="5.5" r="4.5" stroke="#e0e0e0" fill="none"/><path d="M5.5 3 L5.5 8 M3 5.5 L8 5.5" stroke="#e0e0e0"/></svg><svg style="position:absolute;left:416px;top:425.5px;" width="3" height="7" viewBox="0 0 3 7"><g fill="#d0d0d0"><rect x="0" y="0" width="2" height="1.6"/><rect x="0" y="2.7" width="2" height="1.6"/><rect x="0" y="5.3" width="2" height="1.6"/></g></svg><div style="position:absolute;left:425px;top:424.2px;width:251px;height:8.2px;background:#363636;"></div><div style="position:absolute;left:425px;top:424.2px;width:8px;height:8.2px;background:#484848;"></div><div style="position:absolute;left:433.5px;top:424.2px;width:222.5px;height:8.2px;background:#505252;"></div><div style="position:absolute;left:676px;top:424.2px;width:8px;height:8.2px;background:#484848;"></div><svg style="position:absolute;left:427px;top:426px;" width="4" height="5" viewBox="0 0 4 5"><path d="M3 0.5 L1 2.5 L3 4.5 Z" fill="#c0c0c0"/></svg><svg style="position:absolute;left:679px;top:426px;" width="4" height="5" viewBox="0 0 4 5"><path d="M1 0.5 L3 2.5 L1 4.5 Z" fill="#c0c0c0"/></svg><div style="position:absolute;left:1px;top:434.8px;width:694px;height:13.2px;background:#2b2a2a;"></div><div style="position:absolute;left:4.70px;top:439.54px;font-size:6.8px;line-height:6.8px;color:#e8e8e8;white-space:pre;transform:scaleX(0.8790) translateZ(0);transform-origin:0 0;-webkit-text-stroke:0.12px currentColor;">Bereit</div><svg style="position:absolute;left:31px;top:438px;" width="10" height="9" viewBox="0 0 10 9"><rect x="0.5" y="0.5" width="8.5" height="7.5" stroke="#d8d8d8" fill="#3a3a3a"/><rect x="1" y="1" width="7.5" height="2" fill="#9a9a9a"/><path d="M2.5 4 V7 M2.5 5.5 H5" stroke="#c8c8c8" stroke-width="0.8"/><circle cx="6.8" cy="6" r="1.3" fill="#e8e8e8"/></svg><svg style="position:absolute;left:49px;top:437px;" width="10" height="9" viewBox="0 0 10 9"><g stroke="#d0d0d0" fill="none"><circle cx="4" cy="5" r="3.5" stroke-dasharray="2 1"/><path d="M5 4 L8 8"/></g></svg><div style="position:absolute;left:59.60px;top:439.64px;font-size:6.8px;line-height:6.8px;color:#e8e8e8;white-space:pre;transform:scaleX(0.8745) translateZ(0);transform-origin:0 0;-webkit-text-stroke:0.12px currentColor;">Barrierefreiheit: Untersuchen</div><div style="position:absolute;left:390.80px;top:439.44px;font-size:6.8px;line-height:6.8px;color:#e8e8e8;white-space:pre;transform:scaleX(0.8947) translateZ(0);transform-origin:0 0;-webkit-text-stroke:0.12px currentColor;">Mittelwert: 13</div><div style="position:absolute;left:436.70px;top:439.44px;font-size:6.8px;line-height:6.8px;color:#e8e8e8;white-space:pre;transform:scaleX(0.8426) translateZ(0);transform-origin:0 0;-webkit-text-stroke:0.12px currentColor;">Anzahl: 16</div><div style="position:absolute;left:472.60px;top:439.44px;font-size:6.8px;line-height:6.8px;color:#e8e8e8;white-space:pre;transform:scaleX(0.8603) translateZ(0);transform-origin:0 0;-webkit-text-stroke:0.12px currentColor;">Summe: 117</div><div style="position:absolute;left:516.3px;top:436px;width:22.4px;height:12px;background:#474747;"></div><svg style="position:absolute;left:523.5px;top:438px;" width="9" height="8" viewBox="0 0 9 8"><g stroke="#e8e8e8" stroke-width="1" fill="none"><rect x="0.5" y="0.5" width="8" height="6.5"/><path d="M0.5 2.3 H8.5 M3.2 0.5 V7 M5.8 0.5 V7 M0.5 4.7 H8.5"/></g></svg><svg style="position:absolute;left:546.5px;top:438px;" width="9" height="8" viewBox="0 0 9 8"><g stroke="#d8d8d8" stroke-width="1" fill="none"><rect x="0.5" y="0.5" width="8" height="6.5"/></g><rect x="2" y="2" width="5" height="3.5" fill="#9a9a9a"/></svg><svg style="position:absolute;left:569px;top:437.5px;" width="9" height="8" viewBox="0 0 9 8"><g stroke="#d8d8d8" stroke-width="1" fill="none"><path d="M0.5 7.5 V0.5 H8.5 V7.5 M0.5 5 H4.5 V0.5 M6.5 0.5 V3"/></g></svg><div style="position:absolute;left:589px;top:441px;width:3.5px;height:1px;background:#c0c0c0;"></div><div style="position:absolute;left:596px;top:441px;width:57px;height:1px;background:#b8b8b8;"></div><div style="position:absolute;left:623.5px;top:438px;width:2.8px;height:7px;background:#e8e8e8;"></div><div style="position:absolute;left:655.5px;top:441px;width:4.5px;height:1px;background:#c0c0c0;"></div><div style="position:absolute;left:657.3px;top:439.2px;width:1px;height:4.6px;background:#c0c0c0;"></div><div style="position:absolute;left:668.90px;top:439.44px;font-size:6.8px;line-height:6.8px;color:#e8e8e8;white-space:pre;transform:scaleX(0.7612) translateZ(0);transform-origin:0 0;-webkit-text-stroke:0.12px currentColor;">100 %</div><div style="position:absolute;left:0px;top:0px;width:696px;height:1px;background:#8a8482;"></div><div style="position:absolute;left:1px;top:1px;width:694px;height:1px;background:#030303;"></div><div style="position:absolute;left:0px;top:0px;width:1px;height:448px;background:#4e5050;"></div><div style="position:absolute;left:695px;top:0px;width:1px;height:448px;background:#555;"></div>
</body></html>
